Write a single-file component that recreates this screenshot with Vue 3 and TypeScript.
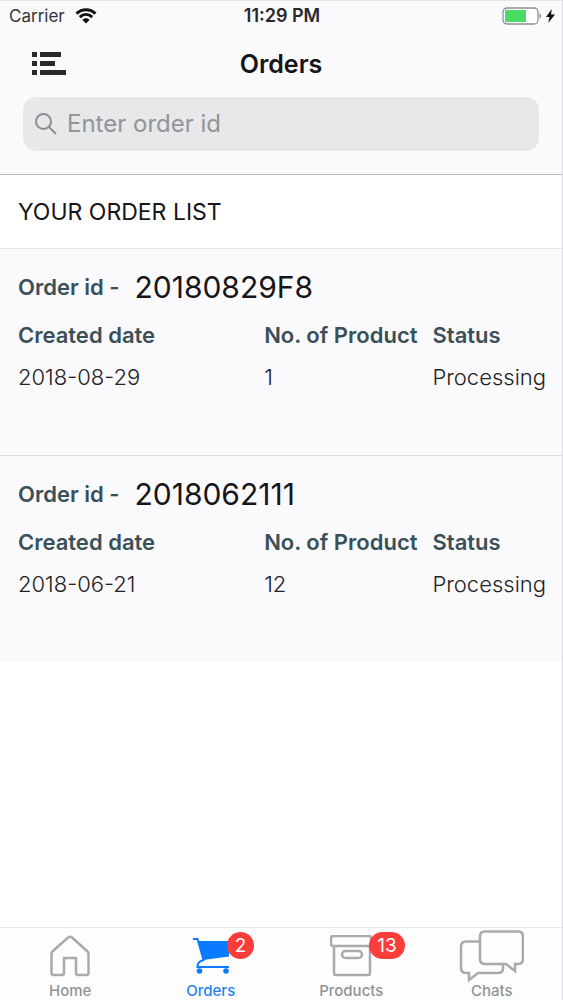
<script setup lang="ts">
import { ref, computed } from 'vue'

interface Order {
  id: string
  created: string
  products: number
  status: string
}

interface Tab {
  name: string
  badge?: number
}

const query = ref('')
const active = ref('Orders')

const orders: Order[] = [
  { id: '20180829F8', created: '2018-08-29', products: 1, status: 'Processing' },
  { id: '2018062111', created: '2018-06-21', products: 12, status: 'Processing' },
]

const tabs: Tab[] = [
  { name: 'Home' },
  { name: 'Orders', badge: 2 },
  { name: 'Products', badge: 13 },
  { name: 'Chats' },
]

const visible = computed(() =>
  orders.filter((o) => o.id.toLowerCase().includes(query.value.trim().toLowerCase())),
)
</script>

<template>
  <div class="screen">
    <header class="header">
      <div class="status-bar">
        <div class="carrier">
          <span>Carrier</span>
          <svg class="wifi" viewBox="0 0 22 16" aria-hidden="true">
            <path d="M1.5 5.6C7 .4 15 .4 20.500 5.600" />
            <path d="M4.800 9.200C8.500 5.700 13.500 5.700 17.200 9.200" />
            <path class="solid" d="M7.300 11.800C9.500 9.700 12.500 9.700 14.700 11.800L11 15.500Z" />
          </svg>
        </div>
        <time class="clock">11:29 PM</time>
        <div class="power">
          <svg class="battery" viewBox="0 0 40 18" aria-hidden="true">
            <rect x="1" y="1" width="35" height="16" rx="4" fill="#fff" stroke="#8e8d91" stroke-width="1.300" />
            <rect x="3" y="3" width="21" height="12" rx="1" fill="#4cd964" />
            <path d="M37.500 6.500C39.800 7 39.800 11 37.500 11.500Z" fill="#8e8d91" />
          </svg>
          <svg class="bolt" viewBox="0 0 9 14" aria-hidden="true">
            <path d="M5.800 0L0 8H3.600L2.200 14L9 5.500H5Z" fill="#111" />
          </svg>
        </div>
      </div>
      <div class="nav">
        <button class="menu" type="button" aria-label="Menu">
          <svg viewBox="0 0 34 24" aria-hidden="true">
            <path
              d="M0 0H5V5H0ZM8 0H29V5H8ZM0 9H5V14H0ZM8 9H23V14H8ZM0 18H5V23H0ZM8 18H34V23H8Z"
              fill="#29282b"
            />
          </svg>
        </button>
        <h1 class="title">Orders</h1>
      </div>
      <label class="search">
        <svg viewBox="0 0 22 22" aria-hidden="true">
          <circle cx="8.500" cy="8.500" r="7.500" />
          <path d="M14 14L21 21" />
        </svg>
        <input v-model="query" type="text" placeholder="Enter order id" aria-label="Enter order id" />
      </label>
    </header>

    <main class="content">
      <h2 class="section">YOUR ORDER LIST</h2>
      <article v-for="order in visible" :key="order.id" class="order">
        <div class="order-id">
          <span class="label">Order id -</span>
          <span class="number">{{ order.id }}</span>
        </div>
        <table class="details">
          <thead>
            <tr>
              <th class="col-date" scope="col">Created date</th>
              <th class="col-count" scope="col">No. of Product</th>
              <th scope="col">Status</th>
            </tr>
          </thead>
          <tbody>
            <tr>
              <td>{{ order.created }}</td>
              <td>{{ order.products }}</td>
              <td>{{ order.status }}</td>
            </tr>
          </tbody>
        </table>
      </article>
    </main>

    <nav class="tabs">
      <button
        v-for="tab in tabs"
        :key="tab.name"
        type="button"
        class="tab"
        :class="{ active: tab.name === active }"
        @click="active = tab.name"
      >
        <span class="icon">
          <svg v-if="tab.name === 'Home'" width="40" height="42" viewBox="0 0 40 42" aria-hidden="true">
            <path
              d="M2.500 16.500Q1.500 17.300 1.500 18.500V38Q1.500 40 3.500 40H12Q14 40 14 38V23H26V38Q26 40 28 40H36.500Q38.500 40 38.500 38V18.500Q38.500 17.300 37.500 16.500L22 2.500Q20 1 18 2.500Z"
            />
          </svg>
          <svg v-else-if="tab.name === 'Orders'" width="38" height="38" viewBox="0 0 38 38" aria-hidden="true">
            <path class="fill" d="M6.500 4H37V19.500L11.500 23Z" />
            <path d="M1 2H5.500L11.500 23Q5 25 5.500 30H37" />
            <circle class="fill" cx="7.500" cy="34" r="2.800" />
            <circle class="fill" cx="34" cy="34" r="2.800" />
          </svg>
          <svg v-else-if="tab.name === 'Products'" width="42" height="42" viewBox="0 0 42 42" aria-hidden="true">
            <rect x="1" y="1" width="40" height="10" rx="2" />
            <path d="M4 11V38Q4 40 6 40H38Q40 40 40 38V11" />
            <rect x="12" y="16" width="20" height="7" rx="3.500" />
          </svg>
          <svg v-else width="65" height="52" viewBox="0 0 65 52" aria-hidden="true">
            <path
              d="M21 11.500H7Q2 11.500 2 16.500V38Q2 43 7 43H10V50L19 43H39Q44 43 44 38V35M26 1.500H59Q64 1.500 64 6.500V29Q64 34 59 34H56V41L47 34H26Q21 34 21 29V6.500Q21 1.500 26 1.500Z"
            />
          </svg>
          <span v-if="tab.badge" class="badge">{{ tab.badge }}</span>
        </span>
        <span class="tab-name">{{ tab.name }}</span>
      </button>
    </nav>
  </div>
</template>

<style>
body {
  margin: 0;
  background: #fff;
}
</style>

<style scoped>
* {
  box-sizing: border-box;
}

.screen {
  display: flex;
  flex-direction: column;
  min-height: 100vh;
  border-right: 1px solid #dddce0;
  background: #fff;
  font-family: Inter, "Liberation Sans", sans-serif;
  color: #161518;
}

.header {
  padding-bottom: 23px;
  border-top: 1px solid #e4e3e6;
  border-bottom: 1px solid #bdbbc0;
  background: #faf9fc;
}

.status-bar {
  display: grid;
  grid-template-columns: 1fr auto 1fr;
  align-items: center;
  height: 29px;
  padding: 0 7px 0 9px;
  font-size: 17px;
  line-height: 20px;
}

.carrier {
  display: flex;
  align-items: center;
  gap: 10px;
  color: #343337;
}

.wifi {
  width: 22px;
  height: 16px;
  fill: none;
  stroke: #111;
  stroke-width: 3;
}

.wifi .solid {
  fill: #111;
  stroke: none;
}

.clock {
  font-size: 18px;
  font-weight: 600;
  color: #29282b;
}

.power {
  display: flex;
  align-items: center;
  justify-content: flex-end;
  gap: 4px;
}

.battery {
  width: 40px;
  height: 18px;
}

.bolt {
  width: 9px;
  height: 14px;
}

.nav {
  display: grid;
  grid-template-columns: 1fr auto 1fr;
  align-items: center;
  height: 67px;
  padding: 0 32px;
}

.menu {
  justify-self: start;
  padding: 0;
  border: 0;
  background: none;
}

.menu svg {
  display: block;
  width: 34px;
  height: 24px;
}

.title {
  margin: 0;
  font-size: 25px;
  line-height: 32px;
  font-weight: 600;
}

.search {
  display: flex;
  align-items: center;
  gap: 10px;
  height: 54px;
  margin: 0 23px;
  padding: 0 12px;
  border-radius: 13px;
  background: #e6e8ea;
}

.search svg {
  flex: none;
  width: 22px;
  height: 22px;
  fill: none;
  stroke: #8d8e92;
  stroke-width: 2;
}

.search input {
  flex: 1;
  min-width: 0;
  padding: 0;
  border: 0;
  outline: 0;
  background: none;
  font: inherit;
  font-size: 24px;
  line-height: 30px;
  color: #161518;
}

.search input::placeholder {
  color: #939498;
  opacity: 1;
}

.content {
  flex: 1;
}

.section {
  margin: 0;
  padding: 22px 18px 20px;
  border-bottom: 1px solid #e6e5e9;
  font-size: 23px;
  line-height: 31px;
  font-weight: 400;
}

.order {
  padding: 20px 18px 57px;
  background: #faf9fc;
}

.order + .order {
  border-top: 1px solid #dddce0;
}

.order-id {
  display: flex;
  align-items: center;
  gap: 15px;
  height: 36px;
}

.label,
.details th {
  font-size: 22px;
  line-height: 28px;
  font-weight: 600;
  color: #3a5058;
}

.number {
  font-size: 30px;
  line-height: 36px;
}

.details {
  width: 100%;
  margin-top: 9px;
  border-collapse: collapse;
  table-layout: fixed;
}

.details th,
.details td {
  height: 42px;
  padding: 0;
  text-align: left;
  white-space: nowrap;
}

.details td {
  font-size: 22px;
  line-height: 28px;
  font-weight: 300;
  color: #232226;
}

.col-date {
  width: 46.8%;
}

.col-count {
  width: 32%;
}

.tabs {
  display: grid;
  grid-template-columns: repeat(4, 1fr);
  height: 73px;
  border-top: 1px solid #e6e5e9;
  background: #fefdfe;
}

.tab {
  display: flex;
  flex-direction: column;
  align-items: center;
  padding: 1px 0 0;
  border: 0;
  background: none;
  font: inherit;
  color: #929195;
}

.tab.active {
  color: #1d83ee;
}

.icon {
  position: relative;
  display: flex;
  align-items: center;
  justify-content: center;
  height: 54px;
}

.icon svg {
  fill: none;
  stroke: #aaa9ad;
  stroke-width: 2.500;
}

.active .icon svg {
  stroke: #0a7aff;
  stroke-width: 2;
}

.icon .fill {
  fill: #0a7aff;
  stroke: none;
}

.badge {
  position: absolute;
  top: 3px;
  left: calc(100% - 3px);
  min-width: 27px;
  padding: 0 8px;
  border-radius: 14px;
  background: #fc3d39;
  font-size: 19px;
  line-height: 27px;
  color: #fff;
}

.tab-name {
  font-size: 15px;
  line-height: 16px;
  font-weight: 500;
}
</style>
